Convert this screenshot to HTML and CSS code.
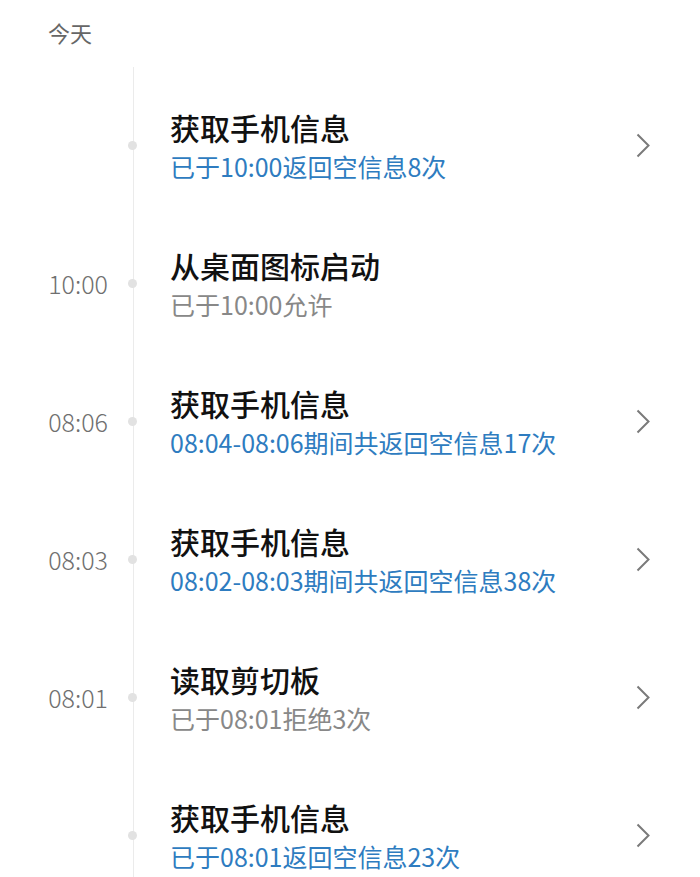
FILE: index.html
```html
<!DOCTYPE html>
<html lang="zh-CN">
<head>
<meta charset="utf-8">
<title>时间线</title>
<link rel="stylesheet" href="styles.css">
</head>
<body>
<div class="page">
  <div class="day">今天</div>
  <div class="timeline">
    <div class="row">
      <div class="time"></div>
      <div class="node"><span class="dot"></span></div>
      <div class="content">
        <div class="title">获取手机信息</div>
        <div class="sub blue">已于10:00返回空信息8次</div>
      </div>
      <div class="arrow"><svg width="14" height="25" viewBox="0 0 14 25"><path d="M1.5 1.5 L12.5 12.5 L1.5 23.5" fill="none" stroke="#7a7a7a" stroke-width="2"/></svg></div>
    </div>
    <div class="row">
      <div class="time">10:00</div>
      <div class="node"><span class="dot"></span></div>
      <div class="content">
        <div class="title">从桌面图标启动</div>
        <div class="sub gray">已于10:00允许</div>
      </div>
      <div class="arrow"></div>
    </div>
    <div class="row">
      <div class="time">08:06</div>
      <div class="node"><span class="dot"></span></div>
      <div class="content">
        <div class="title">获取手机信息</div>
        <div class="sub blue">08:04-08:06期间共返回空信息17次</div>
      </div>
      <div class="arrow"><svg width="14" height="25" viewBox="0 0 14 25"><path d="M1.5 1.5 L12.5 12.5 L1.5 23.5" fill="none" stroke="#7a7a7a" stroke-width="2"/></svg></div>
    </div>
    <div class="row">
      <div class="time">08:03</div>
      <div class="node"><span class="dot"></span></div>
      <div class="content">
        <div class="title">获取手机信息</div>
        <div class="sub blue">08:02-08:03期间共返回空信息38次</div>
      </div>
      <div class="arrow"><svg width="14" height="25" viewBox="0 0 14 25"><path d="M1.5 1.5 L12.5 12.5 L1.5 23.5" fill="none" stroke="#7a7a7a" stroke-width="2"/></svg></div>
    </div>
    <div class="row">
      <div class="time">08:01</div>
      <div class="node"><span class="dot"></span></div>
      <div class="content">
        <div class="title">读取剪切板</div>
        <div class="sub gray">已于08:01拒绝3次</div>
      </div>
      <div class="arrow"><svg width="14" height="25" viewBox="0 0 14 25"><path d="M1.5 1.5 L12.5 12.5 L1.5 23.5" fill="none" stroke="#7a7a7a" stroke-width="2"/></svg></div>
    </div>
    <div class="row">
      <div class="time"></div>
      <div class="node"><span class="dot"></span></div>
      <div class="content">
        <div class="title">获取手机信息</div>
        <div class="sub blue">已于08:01返回空信息23次</div>
      </div>
      <div class="arrow"><svg width="14" height="25" viewBox="0 0 14 25"><path d="M1.5 1.5 L12.5 12.5 L1.5 23.5" fill="none" stroke="#7a7a7a" stroke-width="2"/></svg></div>
    </div>
  </div>
</div>
</body>
</html>
```
FILE: styles.css
```css
html, body {
  margin: 0;
  padding: 0;
  background: #ffffff;
}
body {
  font-family: "Noto Sans CJK SC", "Noto Sans", sans-serif;
  color: #111;
  overflow: hidden;
  height: 877px;
}
.day {
  height: 67px;
  box-sizing: border-box;
  padding: 17px 0 0 48px;
  font-size: 22px;
  line-height: 30px;
  color: #666;
}
.timeline {
  padding-top: 9px;
  background-image: linear-gradient(#ebebeb, #ebebeb);
  background-repeat: no-repeat;
  background-size: 1px 100%;
  background-position: 133px 0;
}
.row {
  display: grid;
  grid-template-columns: 108px 50px 1fr 64px;
  align-items: center;
  height: 138px;
}
.time {
  font-size: 25px;
  line-height: 30px;
  font-weight: 300;
  color: #6f6f6f;
  text-align: right;
}
.node {
  display: flex;
  justify-content: center;
  padding-right: 2px;
}
.dot {
  width: 9px;
  height: 9px;
  border-radius: 50%;
  background: #e2e2e2;
}
.content {
  padding: 6px 0 0 12px;
}
.title {
  font-size: 30px;
  line-height: 36px;
  font-weight: 500;
  color: #111;
  white-space: nowrap;
}
.sub {
  font-size: 25px;
  line-height: 42px;
  white-space: nowrap;
}
.blue { color: #2e7cc0; }
.gray { color: #888; }
.arrow {
  display: flex;
  align-items: center;
}
```
